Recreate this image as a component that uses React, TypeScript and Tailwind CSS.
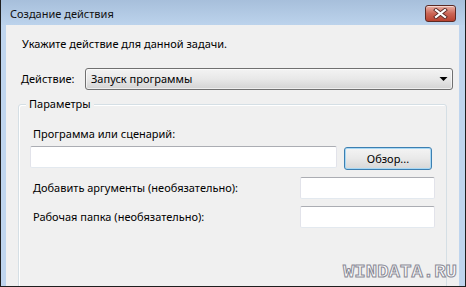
import React from "react";

function CloseButton() {
  return (
    <div className="mt-[5px] w-[31px] h-[17px] rounded-[3px] border border-[#5b2a25] bg-gradient-to-b from-[#e8b0a6] via-[#cb6656] to-[#b8412f] flex items-center justify-center shadow-[inset_0_1px_0_rgba(255,255,255,0.5)]">
      <svg width="15" height="11" viewBox="0 0 15 11">
        <path d="M3 2 L12 9 M12 2 L3 9" stroke="#5a2a26" strokeWidth="4" strokeLinecap="square" fill="none" />
        <path d="M3 2 L12 9 M12 2 L3 9" stroke="#ffffff" strokeWidth="2.2" strokeLinecap="square" fill="none" />
      </svg>
    </div>
  );
}

function TextBox({ className }: { className: string }) {
  return (
    <div
      className={
        "h-[22px] bg-white rounded-[2px] border border-[#e2e3ea] border-t-[#abadb3] border-b-[#e3e9ef] " +
        className
      }
    />
  );
}

export default function App() {
  return (
    <div
      className="relative w-[466px] h-[287px] flex flex-col border-x border-b border-[#1f1f1f] bg-[#bfd5ee] overflow-hidden text-[11px] text-black"
      style={{ fontFamily: '"Noto Sans", "Liberation Sans", sans-serif' }}
    >
      {/* Title bar */}
      <div className="h-[25px] shrink-0 flex items-start justify-between pl-[9px] pr-[9px] bg-gradient-to-b from-[#a7bfdb] to-[#bcd3ec]">
        <div className="mt-[6px] leading-[16px] text-[11px] text-[#111]">Создание действия</div>
        <CloseButton />
      </div>

      {/* Frame + content */}
      <div className="flex-1 min-h-0 flex pl-[5px] pr-[6px]">
        <div className="flex-1 bg-[#f0f0f0] flex flex-col overflow-hidden">
          <div className="pt-[11px] pl-[16px] leading-[16px]">Укажите действие для данной задачи.</div>

          <div className="mt-[11px] ml-[12px] mr-[13px] h-px bg-[#a0a0a0]" />

          <div className="mt-[5px] flex items-center h-[22px] pr-[6px]">
            <div className="w-[79px] pl-[15px] leading-[16px]">Действие:</div>
            <div className="flex-1 h-[22px] rounded-[3px] border border-[#707070] bg-gradient-to-b from-[#f3f3f3] via-[#e8e8e8] to-[#d3d3d3] flex items-center justify-between pl-[5px] pr-[4px] shadow-[inset_0_0_0_1px_rgba(255,255,255,0.6)]">
              <span className="leading-[16px]">Запуск программы</span>
              <svg width="9" height="6" viewBox="0 0 9 6">
                <path d="M0.5 1 L8.5 1 L4.5 5 Z" fill="#000" />
              </svg>
            </div>
          </div>

          {/* Group box */}
          <div className="relative mt-[14px] ml-[12px] mr-[12px] h-[200px] shrink-0 rounded-[3px] border border-[#d5dfe5] shadow-[inset_1px_1px_0_#ffffff] pl-[11px] pr-[11px]">
            <div className="absolute -top-[9px] left-[7px] px-[3px] bg-[#f0f0f0] leading-[16px]">Параметры</div>

            <div className="pt-[21px] pl-[3px] leading-[16px]">Программа или сценарий:</div>
            <div className="mt-[4px] flex items-start">
              <TextBox className="w-[307px]" />
              <div className="ml-[7px] mt-[1px] w-[88px] h-[23px] rounded-[3px] border border-[#3c7fb1] bg-gradient-to-b from-[#f4f4f4] via-[#e9e9e9] to-[#d7d7d7] shadow-[inset_0_0_0_1px_#a8d8f4] flex items-center justify-center leading-[16px]">
                Обзор...
              </div>
            </div>

            <div className="mt-[7px] flex items-center justify-between">
              <span className="pl-[3px] leading-[16px]">Добавить аргументы (необязательно):</span>
              <TextBox className="w-[135px]" />
            </div>

            <div className="mt-[7px] flex items-center justify-between">
              <span className="pl-[3px] leading-[16px]">Рабочая папка (необязательно):</span>
              <TextBox className="w-[135px]" />
            </div>
          </div>
        </div>
      </div>

      {/* Watermark */}
      <div
        className="absolute right-[8px] bottom-[4px] text-[19px] leading-[19px] font-bold text-[#fbfbfb] [-webkit-text-stroke:1px_#8a8a96]"
        style={{ fontFamily: '"Liberation Mono", monospace' }}
      >
        WINDATA.RU
      </div>
    </div>
  );
}
